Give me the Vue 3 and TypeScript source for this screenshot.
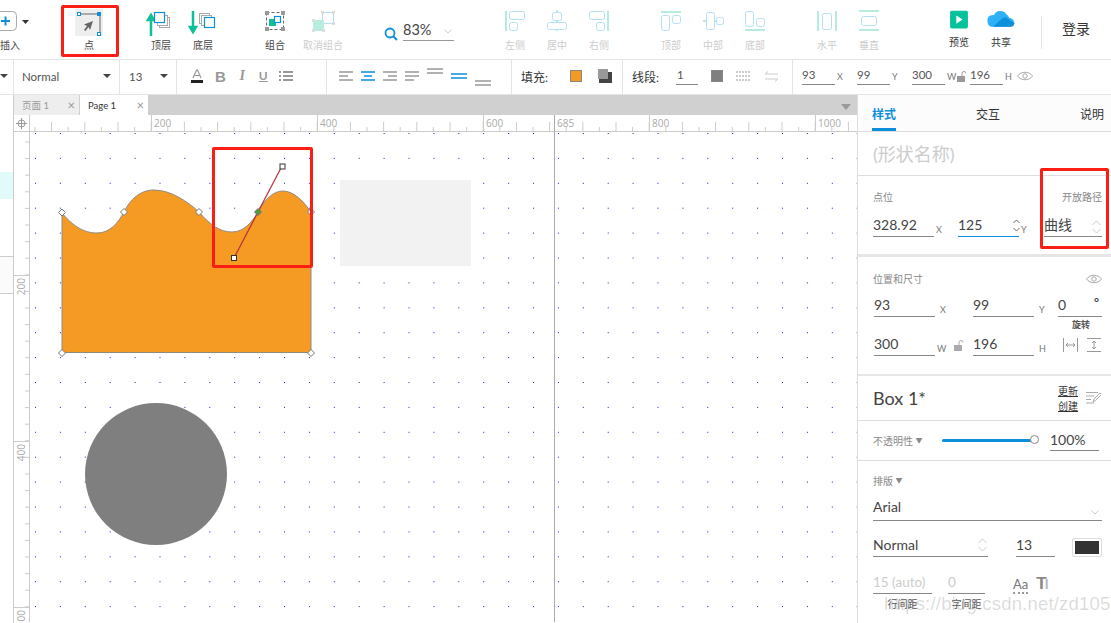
<script setup lang="ts">
const step = 16.6;

// ruler ticks, the long one every 200 units
const hTicks: { x: number; long: boolean }[] = [];
for (let i = 0; i < 51; i++) {
  hTicks.push({ x: 35 + i * step, long: (i + 1) % 2 === 0 });
}
const hLabels = [
  { x: 151, text: "200" },
  { x: 317, text: "400" },
  { x: 483, text: "600" },
  { x: 554, text: "685" },
  { x: 649, text: "800" },
  { x: 815, text: "1000" },
];
const vTicks: { y: number; long: boolean }[] = [];
for (let i = 0; i < 30; i++) {
  vTicks.push({ y: 143 + i * step, long: i % 2 === 0 });
}
const vLabels = [
  { y: 276, text: "200" },
  { y: 442, text: "400" },
  { y: 608, text: "600" },
];
</script>

<template>
  <div class="app">
    <header class="toolbar">
      <div class="tool tool--insert">
        <svg width="42" height="28" viewBox="0 0 42 28">
          <rect x="5.5" y="3.5" width="22" height="19" rx="4" fill="#fff" stroke="#aaa" />
          <path d="M12 13h9M16.500 8.500v9" stroke="#0d8fdc" stroke-width="2" fill="none" />
          <path d="M33 12h7l-3.500 4z" fill="#333" />
        </svg>
        <span>插入</span>
      </div>
      <div class="tool tool--point">
        <svg width="42" height="28" viewBox="0 0 42 28">
          <rect x="7" y="1" width="28" height="27" fill="#eee" />
          <path d="M11 7h21v22" stroke="#666" fill="none" transform="translate(0 -1)" />
          <rect x="9.500" y="4.500" width="3" height="3" fill="#fff" stroke="#0d8fdc" />
          <rect x="29" y="4" width="4" height="4" fill="#0d8fdc" />
          <rect x="29.500" y="24.500" width="3" height="3" fill="#fff" stroke="#0d8fdc" />
          <path d="M25 13l-9 3.500 3 1.500-3 4 1.500 1 3-4 1.500 3z" fill="#666" />
        </svg>
        <span>点</span>
      </div>
      <div class="group group--layer">
        <div class="tool">
          <svg width="42" height="28" viewBox="0 0 42 28">
            <path d="M11 29V8M8 13l3-5 3 5z" stroke="#0fbf98" stroke-width="2.500" fill="#0fbf98" transform="translate(0 -1)" />
            <rect x="19.500" y="9.500" width="10" height="10" fill="#fff" stroke="#aaa" />
            <rect x="17.500" y="7.500" width="10" height="10" fill="#fff" stroke="#aaa" />
            <rect x="14.500" y="4.500" width="10" height="10" fill="#fff" stroke="#0d8fdc" stroke-width="1.200" />
          </svg>
          <span>顶层</span>
        </div>
        <div class="tool">
          <svg width="42" height="28" viewBox="0 0 42 28">
            <path d="M11 3v21M8 19l3 5 3-5z" stroke="#0fbf98" stroke-width="2.500" fill="#0fbf98" />
            <rect x="17.500" y="5.500" width="10" height="10" fill="#fff" stroke="#aaa" />
            <rect x="19.500" y="7.500" width="10" height="10" fill="#fff" stroke="#aaa" />
            <rect x="22.500" y="9.500" width="10" height="10" fill="#fff" stroke="#0d8fdc" stroke-width="1.200" />
          </svg>
          <span>底层</span>
        </div>
      </div>
      <div class="group group--combine">
        <div class="tool">
          <svg width="42" height="28" viewBox="0 0 42 28">
            <rect x="12.500" y="4.500" width="17" height="17" fill="none" stroke="#666" stroke-dasharray="3 2" />
            <rect x="11" y="3" width="4" height="4" fill="#999" />
            <rect x="27" y="3" width="4" height="4" fill="#999" />
            <rect x="11" y="19" width="4" height="4" fill="#999" />
            <rect x="27" y="19" width="4" height="4" fill="#999" />
            <rect x="15" y="11" width="7" height="7" fill="#0fbf98" />
            <rect x="20.500" y="8.500" width="6" height="6" fill="#fff" stroke="#0d8fdc" stroke-width="1.200" />
          </svg>
          <span>组合</span>
        </div>
        <div class="tool tool--off">
          <svg width="42" height="28" viewBox="0 0 42 28">
            <rect x="20.500" y="4.500" width="11" height="11" fill="#fff" stroke="#b4dff5" />
            <rect x="11" y="12" width="11" height="11" fill="#b8ecdf" />
            <rect x="19" y="3" width="3" height="3" fill="#ddd" />
            <rect x="30" y="3" width="3" height="3" fill="#ddd" />
            <rect x="30" y="14" width="3" height="3" fill="#ddd" />
            <rect x="10" y="11" width="3" height="3" fill="#ddd" />
            <rect x="10" y="21" width="3" height="3" fill="#ddd" />
            <rect x="20" y="21" width="3" height="3" fill="#ddd" />
          </svg>
          <span>取消组合</span>
        </div>
      </div>
      <div class="zoom">
        <svg width="14" height="14" viewBox="0 0 14 14">
          <circle cx="6" cy="6" r="4.500" fill="none" stroke="#0d8fdc" stroke-width="1.800" />
          <path d="M9.500 9.500l3.500 3.500" stroke="#0d8fdc" stroke-width="2" />
        </svg>
        <div class="zoom__field">
          <span>83%</span>
          <svg width="8" height="5" viewBox="0 0 8 5"><path d="M.5.500L4 4 7.500.500" fill="none" stroke="#ccc" /></svg>
        </div>
      </div>
      <div class="group group--align">
        <div class="tool tool--off">
          <svg width="42" height="28" viewBox="0 0 42 28">
            <rect x="11" y="3" width="2" height="20" fill="#b5ecde" />
            <rect x="15.500" y="3.500" width="15" height="8" rx="2" fill="none" stroke="#b4dff5" />
            <rect x="15.500" y="14.500" width="8" height="8" rx="2" fill="none" stroke="#b4dff5" />
          </svg>
          <span>左侧</span>
        </div>
        <div class="tool tool--off">
          <svg width="42" height="28" viewBox="0 0 42 28">
            <rect x="20" y="2" width="2" height="21" fill="#b5ecde" />
            <rect x="16.500" y="4.500" width="9" height="8" rx="2" fill="#fff" stroke="#b4dff5" />
            <rect x="11.500" y="14.500" width="19" height="7" rx="2" fill="#fff" stroke="#b4dff5" />
          </svg>
          <span>居中</span>
        </div>
        <div class="tool tool--off">
          <svg width="42" height="28" viewBox="0 0 42 28">
            <rect x="29" y="3" width="2" height="20" fill="#b5ecde" />
            <rect x="11.500" y="3.500" width="15" height="8" rx="2" fill="none" stroke="#b4dff5" />
            <rect x="18.500" y="14.500" width="8" height="8" rx="2" fill="none" stroke="#b4dff5" />
          </svg>
          <span>右侧</span>
        </div>
      </div>
      <div class="group group--valign">
        <div class="tool tool--off">
          <svg width="42" height="28" viewBox="0 0 42 28">
            <rect x="11" y="3" width="20" height="2" fill="#b5ecde" />
            <rect x="11.500" y="7.500" width="8" height="15" rx="2" fill="none" stroke="#b4dff5" />
            <rect x="22.500" y="7.500" width="8" height="8" rx="2" fill="none" stroke="#b4dff5" />
          </svg>
          <span>顶部</span>
        </div>
        <div class="tool tool--off">
          <svg width="42" height="28" viewBox="0 0 42 28">
            <rect x="11" y="12" width="20" height="2" fill="#b5ecde" />
            <rect x="14.500" y="4.500" width="8" height="17" rx="2" fill="#fff" stroke="#b4dff5" />
            <rect x="24.500" y="9.500" width="7" height="7" rx="2" fill="#fff" stroke="#b4dff5" />
          </svg>
          <span>中部</span>
        </div>
        <div class="tool tool--off">
          <svg width="42" height="28" viewBox="0 0 42 28">
            <rect x="11" y="21" width="20" height="2" fill="#b5ecde" />
            <rect x="11.500" y="3.500" width="8" height="15" rx="2" fill="none" stroke="#b4dff5" />
            <rect x="22.500" y="10.500" width="8" height="8" rx="2" fill="none" stroke="#b4dff5" />
          </svg>
          <span>底部</span>
        </div>
      </div>
      <div class="group group--spread">
        <div class="tool tool--off">
          <svg width="42" height="28" viewBox="0 0 42 28">
            <rect x="11" y="3" width="2" height="20" fill="#b5ecde" />
            <rect x="29" y="3" width="2" height="20" fill="#b5ecde" />
            <rect x="16.500" y="5.500" width="9" height="16" rx="2" fill="none" stroke="#b4dff5" />
          </svg>
          <span>水平</span>
        </div>
        <div class="tool tool--off">
          <svg width="42" height="28" viewBox="0 0 42 28">
            <rect x="11" y="2" width="20" height="2" fill="#b5ecde" />
            <rect x="11" y="21" width="20" height="2" fill="#b5ecde" />
            <rect x="13.500" y="8.500" width="15" height="9" rx="2" fill="none" stroke="#b4dff5" />
          </svg>
          <span>垂直</span>
        </div>
      </div>
      <div class="group group--share">
        <div class="tool">
          <svg width="42" height="28" viewBox="0 0 42 28">
            <rect x="11" y="3" width="20" height="20" rx="2" fill="#06c29a" />
            <path d="M18 8.500l7 4.500-7 4.500z" fill="#fff" />
          </svg>
          <span>预览</span>
        </div>
        <div class="tool">
          <svg width="42" height="28" viewBox="0 0 42 28">
            <path d="M6 16a6 6 0 0 1 7-8 8 8 0 0 1 14-1 6 6 0 0 1 3 4 6 6 0 0 1 6 6 5 5 0 0 1-5 4H11a5 5 0 0 1-5-5z" fill="#2fb1f5" />
            <path d="M12 21l10-9 4-2 10 7a5 5 0 0 1-5 4z" fill="#0d8fdc" />
          </svg>
          <span>共享</span>
        </div>
      </div>
      <div class="login">登录</div>
    </header>

    <div class="format">
      <div class="cell cell--edge"><i class="caret" /></div>
      <div class="cell cell--style"><span>Normal</span><i class="caret" /></div>
      <div class="cell cell--size"><span>13</span><i class="caret" /></div>
      <div class="cell cell--text">
        <svg width="14" height="14" viewBox="0 0 14 14">
          <path d="M3 9l3.500-8h1L11 9M4.500 6.500h5" fill="none" stroke="#999" stroke-width="1.200" />
          <rect x="1" y="11" width="12" height="3" fill="#222" />
        </svg>
        <b class="fmt-b">B</b>
        <b class="fmt-i">I</b>
        <span class="fmt-u">U</span>
        <svg width="14" height="12" viewBox="0 0 14 12">
          <path d="M0 2h2M4 2h10M0 6h2M4 6h10M0 10h2M4 10h10" stroke="#999" stroke-width="2" />
        </svg>
      </div>
      <div class="cell cell--para">
        <svg width="14" height="10" viewBox="0 0 14 10"><path d="M0 1h14M0 5h9M0 9h14" stroke="#999" stroke-width="1.500" /></svg>
        <svg width="14" height="10" viewBox="0 0 14 10"><path d="M0 1h14M3 5h8M0 9h14" stroke="#0d8fdc" stroke-width="1.500" /></svg>
        <svg width="14" height="10" viewBox="0 0 14 10"><path d="M0 1h14M5 5h9M0 9h14" stroke="#999" stroke-width="1.500" /></svg>
        <svg width="14" height="10" viewBox="0 0 14 10"><path d="M0 1h14M0 5h14M0 9h9" stroke="#999" stroke-width="1.500" /></svg>
        <svg class="para-top" width="16" height="6" viewBox="0 0 16 6"><path d="M0 1h16M0 5h16" stroke="#999" stroke-width="1.500" /></svg>
        <svg width="16" height="6" viewBox="0 0 16 6"><path d="M0 1h16M0 5h16" stroke="#0d8fdc" stroke-width="1.500" /></svg>
        <svg class="para-bottom" width="16" height="6" viewBox="0 0 16 6"><path d="M0 1h16M0 5h16" stroke="#999" stroke-width="1.500" /></svg>
      </div>
      <div class="cell cell--fill">
        <span class="fmt-label">填充:</span>
        <i class="swatch" />
        <svg width="14" height="14" viewBox="0 0 14 14">
          <rect x="1" y="3" width="13" height="11" fill="#444" />
          <rect width="10" height="10" fill="#999" />
        </svg>
      </div>
      <div class="cell cell--line">
        <span class="fmt-label">线段:</span>
        <span class="line-num">1</span>
        <i class="line-color" />
        <svg width="15" height="10" viewBox="0 0 15 10"><path d="M0 1h15M0 5h15M0 9h15" stroke="#999" stroke-dasharray="2 1" /></svg>
        <svg width="15" height="11" viewBox="0 0 15 11"><path d="M14 3H1l3-2.500M1 8h13l-3 2.500" stroke="#ccc" fill="none" /></svg>
      </div>
      <div class="cell cell--geo">
        <span class="geo-val">93</span><em>X</em>
        <span class="geo-val">99</span><em>Y</em>
        <span class="geo-val">300</span><em>W</em>
        <svg width="9" height="11" viewBox="0 0 9 11"><rect y="5" width="8" height="6" fill="#999" /><path d="M5 5V2.500a2 2 0 0 1 4 0" fill="none" stroke="#999" /></svg>
        <span class="geo-val">196</span><em>H</em>
        <svg class="geo-eye" width="16" height="10" viewBox="0 0 16 10">
          <path d="M.5 5C4 0 12 0 15.500 5 12 10 4 10 .5 5z" fill="none" stroke="#aaa" />
          <circle cx="8" cy="5" r="2.200" fill="none" stroke="#aaa" />
        </svg>
      </div>
    </div>

    <div class="main">
      <aside class="rail">
        <div class="rail__cyan" />
        <div class="rail__gray" />
      </aside>

      <section class="stage">
        <div class="tabs">
          <div class="tab tab--off"><span>页面 1</span><i>×</i></div>
          <div class="tab"><span>Page 1</span><i>×</i></div>
          <svg class="tabs__menu" width="12" height="6" viewBox="0 0 12 6"><path d="M1 0h10l-5 6z" fill="#999" /></svg>
        </div>

        <!-- rulers and canvas share one drawing, in page coordinates -->
        <svg class="canvas" width="843" height="507" viewBox="14 116 843 507">
          <defs>
            <pattern id="dots" x="35" y="134" width="24.9" height="24.9" patternUnits="userSpaceOnUse">
              <rect width="1" height="1" fill="#1a1ae0" />
            </pattern>
          </defs>
          <rect x="30" y="133" width="827" height="490" fill="url(#dots)" />

          <path d="M14 132.500H857M29.500 116V623" stroke="#ccc" fill="none" />
          <g stroke="#ccc">
            <line v-for="t in hTicks" :key="t.x" :x1="t.x" :x2="t.x" :y1="t.long ? 123 : 128" y2="132" />
            <line v-for="t in vTicks" :key="t.y" :y1="t.y" :y2="t.y" :x1="t.long ? 25 : 25" x2="29" />
            <line v-for="l in hLabels" :key="l.text" :x1="l.x + 0.5" :x2="l.x + 0.5" y1="116" y2="132" />
            <line v-for="l in vLabels" :key="l.text" x1="14" x2="29" :y1="l.y + 0.5" :y2="l.y + 0.5" />
          </g>
          <text v-for="l in hLabels" :key="l.text" class="ruler-num" :x="l.x + 3" y="128">{{ l.text }}</text>
          <text
            v-for="l in vLabels"
            :key="l.text"
            class="ruler-num"
            text-anchor="end"
            :transform="`translate(25 ${l.y + 3}) rotate(-90)`">{{ l.text }}</text>
          <g fill="none" stroke="#999">
            <circle cx="21.500" cy="124.500" r="3.500" />
            <path d="M21.500 119v11M16 124.500h11" />
          </g>

          <line x1="554.500" x2="554.500" y1="116" y2="623" stroke="#aaaabb" />

          <path
            d="M62 214C76 231 88 234 97 234C110 234 118 224 124 213C132 197 143 191 154 191C171 191 188 203 199 213C210 226 220 233 232 233C244 233 252 223 258 213C266 198 275 192 283 192C294 192 304 203 311 213V353.500H62Z"
            fill="#f59a23"
            stroke="#8f8a80" />
          <rect x="340" y="181" width="131" height="86" fill="#f2f2f2" />
          <circle cx="156" cy="475" r="71" fill="#7f7f7f" />

          <line x1="234" y1="259" x2="282" y2="167" stroke="#b5343a" stroke-width="1.200" />
          <rect x="280" y="165" width="5" height="5" fill="#fff" stroke="#333" />
          <rect x="231.500" y="256.500" width="5" height="5" fill="#fff" stroke="#333" />
          <g fill="#fff" stroke="#777">
            <path d="M62 210l3.500 3.500L62 217l-3.500-3.500z" />
            <path d="M124 209.500l3.500 3.500-3.500 3.500-3.500-3.500z" />
            <path d="M199 209.500l3.500 3.500-3.500 3.500-3.500-3.500z" />
            <path d="M311 209.500l3.500 3.500-3.500 3.500-3.500-3.500z" />
            <path d="M62 350.500l3.500 3.500-3.500 3.500-3.500-3.500z" />
            <path d="M311 350.500l3.500 3.500-3.500 3.500-3.500-3.500z" />
            <path d="M258 209.500l3.500 3.500-3.500 3.500-3.500-3.500z" fill="#4e9a37" />
          </g>
        </svg>
      </section>

      <aside class="panel">
        <nav class="panel__tabs">
          <span class="panel__tab panel__tab--on">样式</span>
          <span class="panel__tab">交互</span>
          <span class="panel__tab">说明</span>
        </nav>

        <div class="sec sec--name">(形状名称)</div>

        <div class="sec sec--point">
          <div class="sec__head">
            <span class="cap">点位</span>
            <span class="cap">开放路径</span>
          </div>
          <div class="row">
            <span class="field w61">328.92</span><em class="axis">X</em>
            <span class="field field--focus w61">125
              <svg class="updown" width="7" height="13" viewBox="0 0 7 13"><path d="M.5 4L3.500 1 6.500 4M.5 9l3 3 3-3" fill="none" stroke="#666" /></svg>
            </span><em class="axis">Y</em>
            <span class="field field--curve">曲线
              <svg class="updown" width="9" height="14" viewBox="0 0 9 14"><path d="M.5 5l4-4 4 4M.5 9l4 4 4-4" fill="none" stroke="#ccc" /></svg>
            </span>
          </div>
        </div>

        <div class="sec sec--place">
          <div class="sec__head">
            <span class="cap">位置和尺寸</span>
            <svg width="16" height="10" viewBox="0 0 16 10">
              <path d="M.5 5C4 0 12 0 15.500 5 12 10 4 10 .5 5z" fill="none" stroke="#aaa" />
              <circle cx="8" cy="5" r="2.200" fill="none" stroke="#aaa" />
            </svg>
          </div>
          <div class="row">
            <span class="field w61 ml1">93</span><em class="axis axis--wide">X</em>
            <span class="field w61">99</span><em class="axis axis--wide">Y</em>
            <span class="field field--deg">0<sup>°</sup></span>
          </div>
          <div class="rotate">旋转</div>
          <div class="row row--size">
            <span class="field w61 ml1">300</span><em class="axis axis--lock">W</em>
            <svg class="lock" width="10" height="11" viewBox="0 0 10 11"><rect y="5" width="8" height="6" fill="#aaa" /><path d="M5 5V2.500a2 2 0 0 1 4 0" fill="none" stroke="#aaa" /></svg>
            <span class="field w61">196</span><em class="axis axis--wide">H</em>
            <svg class="fit" width="15" height="14" viewBox="0 0 15 14"><path d="M.5 0v14M14.500 0v14M3 7h9M5 5L3 7l2 2M10 5l2 2-2 2" fill="none" stroke="#999" /></svg>
            <svg class="fit fit--v" width="14" height="14" viewBox="0 0 14 14"><path d="M0 .5h14M0 13.500h14M7 3v8M5 5l2-2 2 2M5 9l2 2 2-2" fill="none" stroke="#999" /></svg>
          </div>
        </div>

        <div class="sec sec--master">
          <span class="master-name">Box 1*</span>
          <div class="master-links"><a>更新</a><a>创建</a></div>
          <svg width="15" height="14" viewBox="0 0 15 14">
            <path d="M0 1.500h12M0 5h8M0 8.500h5M0 12h8M7 11l1-3 6-6 1.500 1.500-6 6z" fill="none" stroke="#aaa" />
          </svg>
        </div>

        <div class="sec sec--opacity">
          <span class="cap cap--arrow">不透明性 <i>▼</i></span>
          <div class="slider"><i class="slider__knob" /></div>
          <span class="field field--pct">100%</span>
        </div>

        <div class="sec sec--type">
          <span class="cap cap--arrow">排版 <i>▼</i></span>
          <span class="field field--font">Arial
            <svg class="updown" width="8" height="5" viewBox="0 0 8 5"><path d="M.5.500L4 4 7.500.500" fill="none" stroke="#ccc" /></svg>
          </span>
          <div class="row row--font">
            <span class="field field--style">Normal
              <svg class="updown" width="9" height="14" viewBox="0 0 9 14"><path d="M.5 5l4-4 4 4M.5 9l4 4 4-4" fill="none" stroke="#ccc" /></svg>
            </span>
            <span class="field field--num">13</span>
            <span class="color"><i /></span>
          </div>
          <div class="row row--space">
            <div class="spacing spacing--line">
              <span class="field field--muted">15 (auto)</span>
              <small>行间距</small>
            </div>
            <div class="spacing spacing--char">
              <span class="field field--muted">0</span>
              <small>字间距</small>
            </div>
            <span class="aa">Aa</span>
            <span class="tt">T<b>I</b></span>
          </div>
        </div>
      </aside>
    </div>

    <!-- annotation boxes and the watermark lie over everything -->
    <div class="mark mark--tool" />
    <div class="mark mark--handle" />
    <div class="mark mark--path" />
    <div class="watermark">https://blog.csdn.net/zd1050505</div>
  </div>
</template>

<style>
html,
body {
  margin: 0;
  background: #fff;
  overflow: hidden;
}
</style>

<style scoped>
.app {
  position: relative;
  width: 1111px;
  height: 623px;
  overflow: hidden;
  display: flex;
  flex-direction: column;
  font-family: Lato, "Noto Sans CJK SC", sans-serif;
  color: #333;
  background: #fff;
}

/* top toolbar */
.toolbar {
  height: 60px;
  flex: none;
  display: flex;
  box-sizing: border-box;
  padding-top: 8px;
  border-bottom: 1px solid #e4e4e4;
}

.tool {
  width: 42px;
  flex: none;
  display: flex;
  flex-direction: column;
  align-items: center;
  font-size: 10px;
  line-height: 14px;
  color: #444;
}

.tool svg {
  display: block;
  margin-bottom: 1px;
}

.tool span {
  white-space: nowrap;
  margin-top: 1px;
}

.tool--off span {
  color: #ccc;
}

.tool--insert {
  margin-left: -11px;
}

.tool--point {
  margin-left: 37px;
}

.group {
  display: flex;
  flex: none;
}

.group--layer {
  margin-left: 30px;
}

.group--combine {
  margin-left: 30px;
  gap: 6px;
}

.group--align {
  margin-left: 38px;
}

.group--valign {
  margin-left: 30px;
}

.group--spread {
  margin-left: 30px;
}

.group--share {
  margin-left: 48px;
  padding-right: 19px;
  border-right: 1px solid #e4e4e4;
  height: 33px;
  margin-top: 8px;
}

.group--share .tool {
  margin-top: -8px;
}

.group--share .tool span {
  position: relative;
  color: #333;
}

.zoom {
  width: 72px;
  margin-left: 40px;
  flex: none;
  display: flex;
  align-items: flex-start;
  gap: 5px;
  padding-top: 12px;
}

.zoom svg:first-child {
  margin-top: 7px;
}

.zoom__field {
  width: 51px;
  height: 27px;
  box-sizing: border-box;
  margin-top: -6px;
  padding-top: 7px;
  border-bottom: 1px solid #999;
  font-size: 14.500px;
  line-height: 18px;
  display: flex;
  justify-content: space-between;
  color: #444;
}

.zoom__field svg {
  margin: 8px 2px 0 0;
}

.login {
  margin-left: 20px;
  padding-top: 13px;
  font-size: 14px;
  line-height: 16px;
  color: #333;
}

/* format bar */
.format {
  height: 35px;
  flex: none;
  display: flex;
  box-sizing: border-box;
  border-bottom: 1px solid #e4e4e4;
  font-size: 11.500px;
  color: #555;
}

.cell {
  box-sizing: border-box;
  height: 100%;
  flex: none;
  display: flex;
  align-items: center;
  border-right: 1px solid #e4e4e4;
  padding-bottom: 2px;
}

.cell--edge {
  width: 14px;
}

.cell--style {
  width: 106px;
  padding-left: 8px;
  justify-content: space-between;
  padding-right: 8px;
}

.cell--size {
  width: 57px;
  padding-left: 9px;
  justify-content: space-between;
  padding-right: 8px;
}

.cell--text {
  width: 150px;
  padding-left: 13px;
  gap: 11px;
  color: #999;
}

.cell--para {
  width: 185px;
  padding-left: 12px;
  gap: 8px;
}

.cell--fill {
  width: 111px;
  padding-left: 9px;
}

.cell--fill svg {
  margin-left: 16px;
}

.cell--line {
  width: 170px;
  padding-left: 9px;
}

.cell--line svg {
  margin-left: 13px;
}

.cell--geo {
  flex: 1;
  border-right: 0;
  padding-left: 9px;
}

.caret {
  width: 0;
  height: 0;
  border: 4px solid transparent;
  border-top-color: #444;
  border-bottom: 0;
  flex: none;
}

.cell--edge .caret {
  margin-left: 0;
}

.fmt-b {
  font: bold 15px/1 "Liberation Sans", sans-serif;
}

.fmt-i {
  font: italic bold 14px/1 "Liberation Serif", serif;
  width: 11px;
  text-align: center;
}

.fmt-u {
  font-size: 12px;
  line-height: 12px;
  font-weight: 700;
  text-decoration: underline;
}

.para-top {
  margin-top: -10px;
}

.para-bottom {
  margin-top: 13px;
  margin-left: 0;
}

.fmt-label {
  font-size: 12px;
  color: #333;
  width: 30px;
  margin-right: 19px;
  white-space: nowrap;
}

.cell--line .fmt-label {
  margin-right: 14px;
}

.swatch {
  width: 10px;
  height: 10px;
  background: #f59a23;
  border: 1px solid #888;
}

.line-num {
  width: 22px;
  height: 18px;
  line-height: 16px;
  box-sizing: border-box;
  border-bottom: 1px solid #888;
  padding-left: 1px;
}

.line-color {
  width: 12px;
  height: 12px;
  margin-left: 13px;
  background: #7f7f7f;
  border: 1px solid #888;
  box-sizing: border-box;
}

.geo-val {
  width: 33px;
  height: 18px;
  box-sizing: border-box;
  line-height: 16px;
  border-bottom: 1px solid #888;
}

.cell--geo em {
  width: 22px;
  box-sizing: border-box;
  padding-left: 2px;
  font-style: normal;
  font-size: 9px;
  color: #777;
}

.cell--geo svg {
  margin-right: 4px;
}

.cell--geo em:has(+ svg) {
  width: 12px;
}

.geo-eye {
  margin-left: 2px;
}

/* body */
.main {
  flex: 1;
  display: flex;
  min-height: 0;
}

.rail {
  width: 14px;
  flex: none;
  box-sizing: border-box;
  border-right: 1px solid #ccc;
  display: flex;
  flex-direction: column;
}

.rail__cyan {
  height: 27px;
  margin-top: 77px;
  background: #e1fbfb;
}

.rail__gray {
  height: 36px;
  margin-top: 57px;
  background: #fbfbfb;
  border-top: 1px solid #ccc;
  border-bottom: 1px solid #ccc;
}

.stage {
  width: 843px;
  flex: none;
  display: flex;
  flex-direction: column;
}

.tabs {
  height: 20px;
  flex: none;
  background: #d0d0d0;
  display: flex;
  gap: 1px;
  position: relative;
}

.tab {
  width: 68px;
  box-sizing: border-box;
  background: #fff;
  display: flex;
  justify-content: space-between;
  align-items: center;
  padding: 0 4px 0 8px;
  font-size: 9.500px;
  color: #333;
}

.tab i {
  font-style: normal;
  font-size: 13px;
  color: #999;
}

.tab--off {
  width: 65px;
  background: #eee;
  color: #999;
}

.tabs__menu {
  position: absolute;
  right: 5px;
  top: 9px;
}

.canvas {
  display: block;
  flex: none;
}

.ruler-num {
  font: 10px "Open Sans", sans-serif;
  fill: #aaa;
}

/* right panel */
.panel {
  width: 254px;
  flex: none;
  box-sizing: border-box;
  border-left: 1px solid #ddd;
  display: flex;
  flex-direction: column;
}

.panel__tabs {
  height: 37px;
  flex: none;
  box-sizing: border-box;
  background: #fcfcfc;
  border-bottom: 1px solid #ddd;
  display: flex;
  justify-content: space-between;
  padding: 0 7px 0 14px;
  font-size: 12px;
}

.panel__tab {
  height: 36px;
  box-sizing: border-box;
  padding-top: 12px;
  line-height: 16px;
}

.panel__tab--on {
  color: #0d8fdc;
  font-weight: 700;
  border-bottom: 3px solid #0d8fdc;
}

.sec {
  box-sizing: border-box;
  flex: none;
  padding: 0 9px 0 15px;
}

.sec--name {
  height: 44px;
  padding-top: 10px;
  border-bottom: 1px solid #ddd;
  font-size: 18px;
  line-height: 24px;
  color: #ccc;
}

.sec--point {
  height: 81px;
  padding-top: 14px;
  border-bottom: 3px solid #e6e6e6;
}

.sec--place {
  height: 119px;
  padding-top: 15px;
  border-bottom: 2px solid #e6e6e6;
}

.sec__head {
  display: flex;
  justify-content: space-between;
  align-items: center;
  height: 14px;
}

.cap {
  font-size: 10px;
  line-height: 14px;
  color: #888;
}

.cap--arrow i {
  font-style: normal;
  font-size: 7px;
  vertical-align: 2px;
}

.row {
  display: flex;
  align-items: flex-end;
}

.sec--point .row {
  margin-top: 11px;
}

.sec--place .row {
  margin-top: 9px;
}

.field {
  position: relative;
  display: block;
  flex: none;
  box-sizing: border-box;
  height: 22px;
  line-height: 20px;
  font-size: 14px;
  color: #444;
  border-bottom: 1px solid #888;
  white-space: nowrap;
}

.w61 {
  width: 61px;
}

.ml1 {
  margin-left: 1px;
}

.field--focus {
  border-bottom-color: #0d8fdc;
}

.field--curve {
  width: 58px;
  margin-left: 8px;
}

.updown {
  position: absolute;
  right: 1px;
  top: 5px;
}

.field--focus .updown {
  right: -1px;
  top: 4px;
}

.axis {
  width: 24px;
  box-sizing: border-box;
  padding-left: 2px;
  font-style: normal;
  font-size: 9px;
  line-height: 14px;
  color: #777;
  flex: none;
}

.axis--wide {
  padding-left: 5px;
  width: 38px;
}

.sec--point .axis + .field--focus + .axis {
  width: 17px;
}

.axis--lock {
  padding-left: 2px;
  width: 19px;
}

.field--deg {
  width: 44px;
  margin-left: -14px;
}

.field--deg sup {
  position: absolute;
  right: 3px;
  top: -3px;
  font-size: 12px;
  font-weight: 700;
}

.rotate {
  margin: 2px 0 0 186px;
  width: 44px;
  text-align: center;
  font-size: 9px;
  line-height: 12px;
  font-weight: 700;
  color: #555;
}

.sec--place .row--size {
  margin-top: 3px;
}

.lock {
  flex: none;
  margin: 0 9px 5px 0;
}

.row--size .axis--wide {
  width: 24px;
}

.fit {
  flex: none;
  margin: 0 0 4px 5px;
}

.fit--v {
  margin-left: 9px;
}

.sec--master {
  height: 45px;
  border-bottom: 1px solid #ddd;
  display: flex;
  align-items: center;
}

.master-name {
  font-size: 18px;
  width: 185px;
  color: #444;
}

.master-links {
  width: 28px;
  display: flex;
  flex-direction: column;
  gap: 1px;
  font-size: 10px;
  line-height: 14px;
  text-decoration: underline;
}

.sec--opacity {
  height: 40px;
  border-bottom: 1px solid #ddd;
  display: flex;
  align-items: center;
}

.sec--opacity .cap {
  width: 69px;
}

.slider {
  position: relative;
  width: 93px;
  height: 3px;
  background: #0d8fdc;
  border-radius: 2px;
}

.slider__knob {
  position: absolute;
  right: -4px;
  top: -3px;
  width: 7px;
  height: 7px;
  border: 1px solid #888;
  border-width: 1.500px;
  border-radius: 50%;
  background: #fff;
  box-sizing: content-box;
  margin-top: -1px;
}

.field--pct {
  width: 49px;
  margin-left: 15px;
  height: 21px;
}

.sec--type {
  height: 162px;
  padding-top: 12px;
}

.sec--type .cap {
  display: block;
}

.field--font {
  margin-top: 8px;
  width: 229px;
  height: 25px;
  line-height: 22px;
}

.field--font .updown {
  top: 14px;
  right: 3px;
}

.row--font {
  margin-top: 14px;
  height: 22px;
}

.field--style {
  width: 115px;
}

.field--style .updown {
  right: 1px;
  top: 3px;
}

.field--num {
  width: 39px;
  margin-left: 28px;
}

.color {
  width: 30px;
  height: 19px;
  margin: 0 0 0 17px;
  box-sizing: border-box;
  border: 1px solid #ddd;
  border-radius: 2px;
  padding: 2px;
  display: flex;
}

.color i {
  flex: 1;
  background: #333;
}

.row--space {
  margin-top: 15px;
  align-items: flex-start;
}

.spacing {
  display: flex;
  flex-direction: column;
  align-items: center;
}

.spacing small {
  font-size: 10px;
  line-height: 14px;
  margin-top: 3px;
  color: #555;
}

.spacing--line {
  width: 59px;
}

.spacing--char {
  width: 37px;
  margin-left: 16px;
}

.field--muted {
  width: 100%;
  color: #ccc;
  font-size: 13.500px;
}

.aa {
  margin: 4px 0 0 28px;
  font-size: 13px;
  line-height: 16px;
  color: #777;
  border-bottom: 2px dotted #999;
}

.tt {
  margin: 3px 0 0 8px;
  font: bold 17px/18px "Liberation Sans", sans-serif;
  color: #888;
}

.tt b {
  font-size: 14px;
  color: #bbb;
  margin-left: -2px;
}

/* overlays */
.mark {
  position: absolute;
  box-sizing: border-box;
  border: 3px solid #fa1e14;
  border-radius: 2px;
}

.mark--tool {
  left: 61px;
  top: 5px;
  width: 58px;
  height: 52px;
}

.mark--handle {
  left: 212px;
  top: 147px;
  width: 101px;
  height: 121px;
}

.mark--path {
  left: 1040px;
  top: 168px;
  width: 69px;
  height: 81px;
}

.watermark {
  position: absolute;
  left: 884px;
  top: 592px;
  font: 18.500px/24px "Liberation Sans", sans-serif;
  letter-spacing: 0.200px;
  color: rgba(130, 130, 130, 0.28);
  white-space: nowrap;
}
</style>
